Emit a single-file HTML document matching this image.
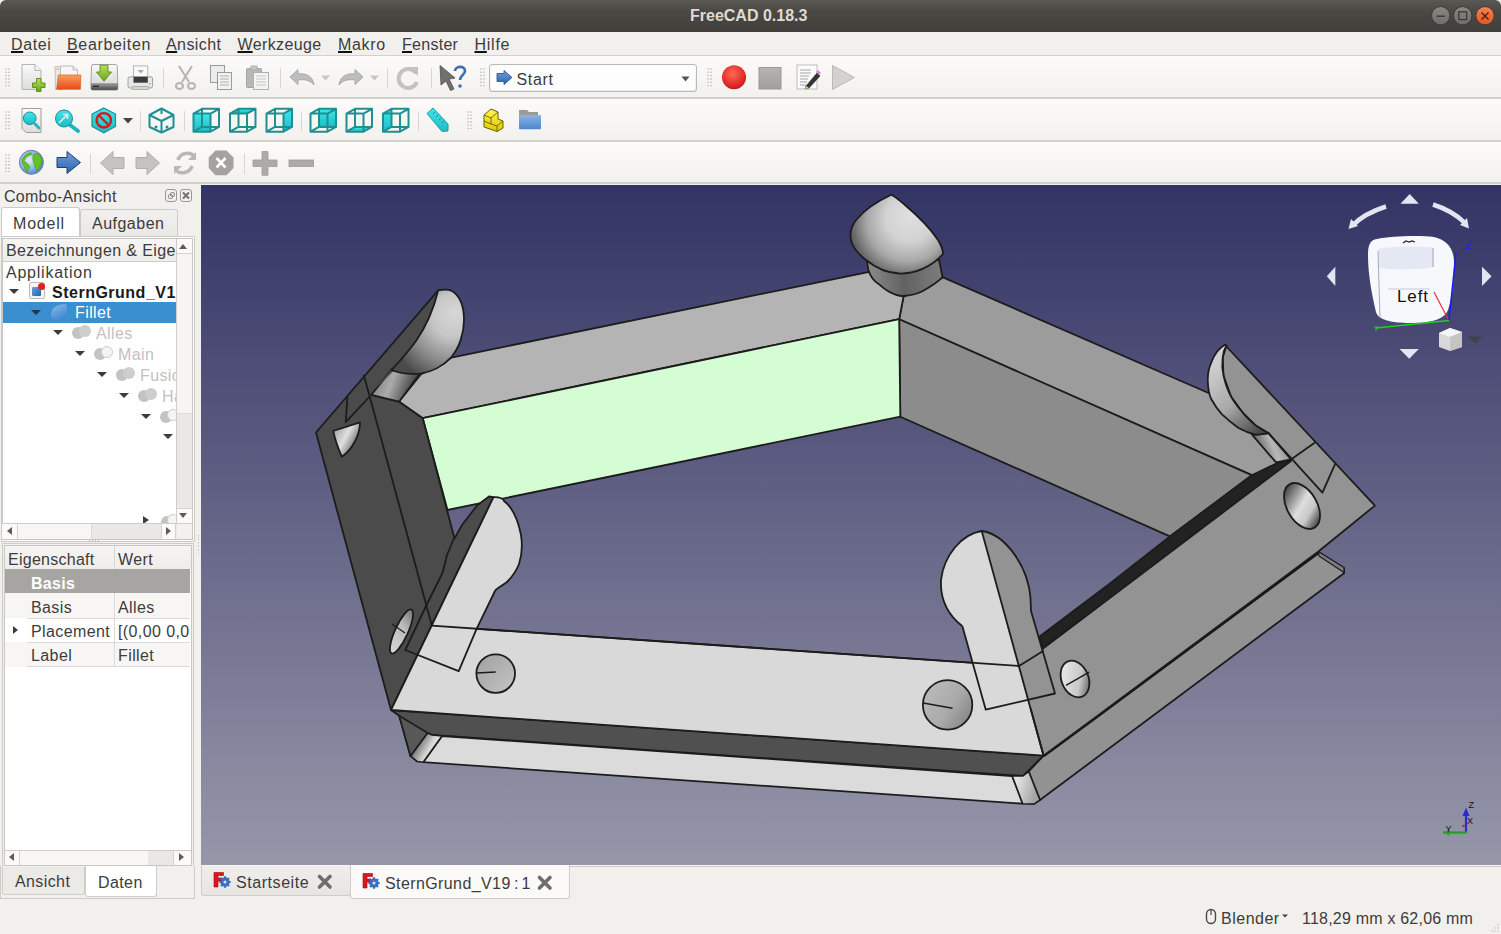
<!DOCTYPE html>
<html><head><meta charset="utf-8">
<style>
*{box-sizing:border-box}
html,body{margin:0;padding:0}
body{width:1501px;height:934px;overflow:hidden;position:relative;background:#f2f0ed;font-family:"Liberation Sans",sans-serif;color:#3c3c3c}
.abs{position:absolute}
.t{position:absolute;white-space:nowrap;font-size:16px;letter-spacing:0.4px;line-height:18px}
#title{left:0;top:0;width:1501px;height:32px;background:linear-gradient(#5a5852,#4a4944 35%,#403f3b);border-radius:6px 6px 0 0}
#menubar{left:0;top:32px;width:1501px;height:24px;background:#f1f0ec;border-bottom:1px solid #d2d0cc}
.tb{left:0;width:1501px;height:43px;background:linear-gradient(#fcfbf9,#f2f1ee);border-bottom:2px solid #d2d0cc}
.u{text-decoration:underline;text-decoration-thickness:2px;text-underline-offset:1px;text-decoration-color:#111}
.sep{position:absolute;width:1px;height:26px;background:#d5d3cf;border-right:1px solid #fff}
.tri{width:0;height:0;border-left:5px solid transparent;border-right:5px solid transparent;border-top:5px solid #3c3c3c}
.grip{position:absolute;width:5px;height:26px;background-image:radial-gradient(circle,#b9b7b3 0.8px,transparent 1px);background-size:3px 3px}
</style></head>
<body>
<!-- TITLE BAR -->
<div id="title" class="abs">
  <div class="t" style="left:690px;top:7px;font-weight:bold;font-size:16px;letter-spacing:0;color:#dfdbd2">FreeCAD 0.18.3</div>
  <svg class="abs" style="left:1420px;top:0" width="81" height="32" viewBox="1420 0 81 32">
    <defs><linearGradient id="wb" x1="0" y1="0" x2="0" y2="1"><stop offset="0" stop-color="#8a8985"/><stop offset="1" stop-color="#6e6d69"/></linearGradient>
    <linearGradient id="wc" x1="0" y1="0" x2="0" y2="1"><stop offset="0" stop-color="#f58456"/><stop offset="1" stop-color="#e4531c"/></linearGradient></defs>
    <circle cx="1440.7" cy="15.7" r="9.2" fill="url(#wb)" stroke="#3a3935" stroke-width="1"/>
    <path d="M1436.5,16.2 H1445" stroke="#3a3935" stroke-width="1.4"/>
    <circle cx="1462.7" cy="15.7" r="9.2" fill="url(#wb)" stroke="#3a3935" stroke-width="1"/>
    <rect x="1458.8" y="11.8" width="7.8" height="7.8" fill="none" stroke="#3a3935" stroke-width="1.3"/>
    <circle cx="1485" cy="15.7" r="9.2" fill="url(#wc)" stroke="#3a3935" stroke-width="1"/>
    <path d="M1481.5,12.5 L1488.5,19.5 M1488.5,12.5 L1481.5,19.5" stroke="#3a2418" stroke-width="1.3"/>
  </svg>
</div>
<!-- MENU BAR -->
<div id="menubar" class="abs">
  <span class="t" style="left:11px;top:3.5px;letter-spacing:0.62px"><span class="u">D</span>atei</span>
  <span class="t" style="left:67px;top:3.5px;letter-spacing:0.67px"><span class="u">B</span>earbeiten</span>
  <span class="t" style="left:166px;top:3.5px;letter-spacing:0.42px"><span class="u">A</span>nsicht</span>
  <span class="t" style="left:237.5px;top:3.5px;letter-spacing:0.38px"><span class="u">W</span>erkzeuge</span>
  <span class="t" style="left:338px;top:3.5px;letter-spacing:0.68px"><span class="u">M</span>akro</span>
  <span class="t" style="left:402px;top:3.5px;letter-spacing:0.28px"><span class="u">F</span>enster</span>
  <span class="t" style="left:474.5px;top:3.5px;letter-spacing:0.75px"><span class="u">H</span>ilfe</span>
</div>
<!-- TOOLBARS -->
<div class="abs tb" style="top:56px"></div>
<div class="abs tb" style="top:99px"></div>
<div class="abs tb" style="top:142px;height:42px"></div>
<svg class="abs" style="left:0;top:0" width="1501" height="184" viewBox="0 0 1501 184">
<defs>
  <linearGradient id="gDoc" x1="0" y1="0" x2="0" y2="1"><stop offset="0" stop-color="#fafafa"/><stop offset="1" stop-color="#dcdcdc"/></linearGradient>
  <linearGradient id="gGreen" x1="0" y1="0" x2="0" y2="1"><stop offset="0" stop-color="#b6e05a"/><stop offset="1" stop-color="#6aa51c"/></linearGradient>
  <linearGradient id="gOrange" x1="0" y1="0" x2="0" y2="1"><stop offset="0" stop-color="#f7a15d"/><stop offset="1" stop-color="#e8481a"/></linearGradient>
  <linearGradient id="gDrive" x1="0" y1="0" x2="0" y2="1"><stop offset="0" stop-color="#f0f0f0"/><stop offset="0.75" stop-color="#c8c8c8"/><stop offset="1" stop-color="#6a6a6a"/></linearGradient>
  <linearGradient id="gCyan" x1="0" y1="0" x2="0" y2="1"><stop offset="0" stop-color="#40e6ea"/><stop offset="1" stop-color="#1cbcc4"/></linearGradient>
  <radialGradient id="gRed" cx="0.45" cy="0.35" r="0.7"><stop offset="0" stop-color="#ff6a5a"/><stop offset="0.7" stop-color="#e02a22"/><stop offset="1" stop-color="#b0142a"/></radialGradient>
  <linearGradient id="gStop" x1="0" y1="0" x2="0" y2="1"><stop offset="0" stop-color="#b8b6b3"/><stop offset="1" stop-color="#a09e9b"/></linearGradient>
  <linearGradient id="gBlue" x1="0" y1="0" x2="0" y2="1"><stop offset="0" stop-color="#6da0dc"/><stop offset="1" stop-color="#2f63ad"/></linearGradient>
  <radialGradient id="gGlobe" cx="0.4" cy="0.4" r="0.7"><stop offset="0" stop-color="#e6f2fb"/><stop offset="0.6" stop-color="#7fb2e0"/><stop offset="1" stop-color="#3d6fb4"/></radialGradient>
  <linearGradient id="gYel" x1="0" y1="0" x2="0" y2="1"><stop offset="0" stop-color="#fff35a"/><stop offset="1" stop-color="#e0c800"/></linearGradient>
  <linearGradient id="gFold" x1="0" y1="0" x2="0" y2="1"><stop offset="0" stop-color="#8ab4e2"/><stop offset="1" stop-color="#4d86cc"/></linearGradient>
</defs>
<g fill="#b9b7b3">
  <!-- grips -->
  <g id="grip"><circle cx="6" cy="69" r="0.8"/><circle cx="9" cy="69" r="0.8"/><circle cx="6" cy="72.3" r="0.8"/><circle cx="9" cy="72.3" r="0.8"/><circle cx="6" cy="75.6" r="0.8"/><circle cx="9" cy="75.6" r="0.8"/><circle cx="6" cy="78.9" r="0.8"/><circle cx="9" cy="78.9" r="0.8"/><circle cx="6" cy="82.2" r="0.8"/><circle cx="9" cy="82.2" r="0.8"/><circle cx="6" cy="85.5" r="0.8"/><circle cx="9" cy="85.5" r="0.8"/></g>
  <use href="#grip" x="0" y="43"/><use href="#grip" x="0" y="86"/>
  <use href="#grip" x="475" y="0"/><use href="#grip" x="702" y="0"/><use href="#grip" x="462" y="43"/>
</g>
<g fill="#d8d6d2">
  <rect x="163" y="68" width="1" height="20"/><rect x="280" y="68" width="1" height="20"/><rect x="387" y="68" width="1" height="20"/><rect x="431" y="68" width="1" height="20"/>
  <rect x="140" y="111" width="1" height="20"/><rect x="184" y="111" width="1" height="20"/><rect x="301" y="111" width="1" height="20"/><rect x="418" y="111" width="1" height="20"/>
  <rect x="90" y="154" width="1" height="20"/><rect x="244" y="154" width="1" height="20"/>
</g>
<!-- ROW 1 -->
<!-- new -->
<path d="M22,64.5 H35 L41,70.5 V89.5 H22 Z" fill="url(#gDoc)" stroke="#b5b5b5" stroke-width="1"/>
<path d="M35,64.5 V70.5 H41" fill="#f4f4f4" stroke="#b5b5b5" stroke-width="1"/>
<path d="M36.5,78.5 h4.5 v4.5 h4 v4.5 h-4 v4 h-4.5 v-4 h-4 v-4.5 h4 z" fill="url(#gGreen)" stroke="#5e8f1a" stroke-width="1"/>
<!-- open -->
<path d="M55,66.5 H62 V89.3 H55.5 Z" fill="#e8e8e8" stroke="#b8b8b8" stroke-width="0.8"/>
<rect x="56.5" y="68.5" width="2.5" height="1.2" fill="#f0a050"/>
<path d="M60.5,66 H73 L77.5,70 V76 H60.5 Z" fill="#f6f6f6" stroke="#b5b5b5" stroke-width="0.9"/>
<path d="M73,66 V70 H77.5" fill="#e4e4e4" stroke="#b5b5b5" stroke-width="0.8"/>
<path d="M58.4,75 H80.8 L80.4,89.3 H56.6 Z" fill="url(#gOrange)" stroke="#dd5a22" stroke-width="0.7"/>
<!-- save -->
<path d="M93,64.5 H115.5 Q117,64.5 117.2,66.5 L117.8,84 H91 L91.5,66.5 Q91.8,64.5 93,64.5 Z" fill="url(#gDoc)" stroke="#9a9a9a" stroke-width="0.9"/>
<defs><linearGradient id="gDrv2" x1="0" y1="0" x2="0" y2="1"><stop offset="0" stop-color="#a8a8a8"/><stop offset="0.5" stop-color="#6a6a6a"/><stop offset="1" stop-color="#505050"/></linearGradient></defs><path d="M91,84 H117.8 V88.5 Q117.8,90 116,90 H92.8 Q91,90 91,88.5 Z" fill="url(#gDrv2)" stroke="#606060" stroke-width="0.6"/>
<rect x="93" y="85.6" width="6" height="1.3" fill="#222"/>
<ellipse cx="104.5" cy="77" rx="10.5" ry="5.5" fill="none" stroke="#dcdcdc" stroke-width="1"/>
<path d="M100,65.2 h8 v6.8 h3.5 l-7.5,9.2 l-7.5,-9.2 h3.5 z" fill="url(#gGreen)" stroke="#5e8f1a" stroke-width="0.9"/>
<!-- print -->
<rect x="133.5" y="65.9" width="14.3" height="12" fill="#fafafa" stroke="#b0b0b0" stroke-width="0.9"/>
<path d="M137.5,70 h6.5 l-3.25,3.5 z" fill="#a8a8a8"/>
<path d="M130,76.8 H151 Q152.6,76.8 152.6,79 V86 Q152.6,88 150.5,88 H130 Q128,88 128,86 V79 Q128,76.8 130,76.8 Z" fill="#e6e6e6" stroke="#999" stroke-width="0.9"/>
<rect x="133.5" y="76.8" width="14.3" height="5.9" fill="#3a3a3a"/>
<rect x="132" y="86.5" width="17" height="3" rx="1" fill="#d4d4d4" stroke="#9a9a9a" stroke-width="0.7"/>
<rect x="149" y="83" width="1.5" height="1.2" fill="#60d040"/>
<!-- cut -->
<g fill="none" stroke="#b4b4b4" stroke-width="2">
  <path d="M179,66 L189,82 M192,66 L182,82"/>
  <ellipse cx="179.5" cy="86" rx="3.5" ry="3"/><ellipse cx="191.5" cy="86" rx="3.5" ry="3"/>
</g>
<!-- copy -->
<rect x="210.5" y="65.5" width="14" height="17" fill="#ececec" stroke="#9a9a9a" stroke-width="1"/>
<rect x="217.5" y="72.5" width="14" height="17" fill="#f2f2f2" stroke="#9a9a9a" stroke-width="1"/>
<g stroke="#b0b0b0" stroke-width="1"><path d="M220,76h9M220,79h9M220,82h9M220,85h9"/></g>
<!-- paste -->
<rect x="246.5" y="68.5" width="15" height="19" rx="1" fill="#b8b8b8" stroke="#a4a4a4" stroke-width="1"/>
<rect x="251" y="66" width="6" height="4" fill="#c8c8c8" stroke="#a4a4a4" stroke-width="0.8"/>
<rect x="253.5" y="72.5" width="15" height="17" fill="#f4f4f4" stroke="#b0b0b0" stroke-width="1"/>
<g stroke="#c4c4c4" stroke-width="1"><path d="M256,76h10M256,79h10M256,82h10M256,85h10"/></g>
<!-- undo -->
<path d="M290,77 L298,69.5 V74 C306,73 313,76 314,85 C310,80 305,79 298,80 V84.5 Z" fill="#bdbdbd" stroke="#aaa" stroke-width="1" stroke-linejoin="round"/>
<path d="M321,75.5 h9 l-4.5,5 z" fill="#c6c6c6"/>
<!-- redo -->
<path d="M363,77 L355,69.5 V74 C347,73 340,76 339,85 C343,80 348,79 355,80 V84.5 Z" fill="#bdbdbd" stroke="#aaa" stroke-width="1" stroke-linejoin="round"/>
<path d="M370,75.5 h9 l-4.5,5 z" fill="#c6c6c6"/>
<!-- refresh -->
<path d="M416,73 A9.5,9.5 0 1 0 417,82" fill="none" stroke="#c2c2c2" stroke-width="4"/>
<path d="M409,67 L418,67 L418,76 Z" fill="#c2c2c2"/>
<!-- whats this -->
<path d="M440,65.5 L455,78 L449,79 L454,89 L450.5,90.5 L446,81 L441,85 Z" fill="#6e716e" stroke="#4a4c4a" stroke-width="0.8"/>
<path d="M455,71 C455,66 465,65 465,71 C465,75 460,75 460,80" fill="none" stroke="#3b6fb0" stroke-width="2.6"/>
<circle cx="460" cy="86" r="1.8" fill="#3b6fb0"/>
<!-- combo -->
<rect x="489.5" y="64.5" width="207" height="27" rx="2.5" fill="url(#gDoc)" stroke="#bcbab6" stroke-width="1"/>
<rect x="490.5" y="65.5" width="205" height="25" rx="2" fill="#fdfdfd"/>
<path d="M497,73.5 H504 V70.5 L512,77.5 L504,84.5 V81.5 H497 Z" fill="url(#gBlue)" stroke="#234c86" stroke-width="0.8"/>
<path d="M681.5,76.5 h8 l-4,5 z" fill="#555"/>
<!-- record -->
<circle cx="734" cy="77.3" r="12" fill="url(#gRed)"/>
<!-- stop -->
<rect x="759" y="67.5" width="22" height="21.5" fill="url(#gStop)" stroke="#9a9896" stroke-width="1"/>
<!-- edit macro -->
<rect x="797" y="65" width="20" height="24" fill="#fbfbfb" stroke="#bdbdbd" stroke-width="1"/>
<g stroke="#9a9a9a" stroke-width="0.9"><path d="M800,70h11M800,73h11M800,76h9M800,79h8M800,82h7M800,85h6"/></g>
<path d="M806,86 L817,73 L820,76 L809,88 L805,89 Z" fill="#333" stroke="#222" stroke-width="0.6"/>
<path d="M816,72 L818,70 L821,73 L819,75 Z" fill="#e080d8"/>
<path d="M805,89 L806,86 L809,88 Z" fill="#e8e070"/>
<!-- play -->
<path d="M832.5,65.5 L854.5,77.5 L832.5,89.5 Z" fill="#d4d2cf" stroke="#bcbab7" stroke-width="1" stroke-linejoin="round"/>
<!-- ROW 2 -->
<!-- fit all -->
<path d="M22,108.5 H41 V132.5 H26 L22,128.5 Z" fill="url(#gDoc)" stroke="#9e9e9e" stroke-width="1"/>
<path d="M35,124 L39,128" stroke="#1fb5bf" stroke-width="3" stroke-linecap="round"/>
<circle cx="29.7" cy="118.3" r="6.3" fill="url(#gCyan)" stroke="#168f96" stroke-width="1"/>
<!-- fit selection -->
<path d="M70,125 L78,131" stroke="#1fb5bf" stroke-width="4" stroke-linecap="round"/>
<circle cx="64" cy="118.5" r="8.5" fill="url(#gCyan)" stroke="#168f96" stroke-width="1"/>
<path d="M59,123 L67,115 M63,114.5 H67.5 V119" fill="none" stroke="#e8e8e8" stroke-width="1.6"/>
<!-- draw style -->
<path d="M103.8,108 L115.5,114 V126.5 L103.8,132.8 L92,126.5 V114 Z" fill="url(#gCyan)" stroke="#168f96" stroke-width="1.2"/>
<circle cx="103.8" cy="120.3" r="7.2" fill="none" stroke="#d01c1c" stroke-width="2.4"/>
<path d="M99,115.5 L108.6,125" stroke="#d01c1c" stroke-width="2.4"/>
<path d="M123,118 h10 l-5,5.5 z" fill="#444"/>
<!-- cubes -->
<g id="cubeIso" fill="none" stroke="#1e8f92" stroke-width="2" stroke-linejoin="round">
  <path d="M161.5,108.5 L173.5,115 V127 L161.5,132.5 L149.5,127 V115 Z"/>
  <path d="M149.5,115 L161.5,121 L173.5,115 M161.5,121 V132.5 M161.5,108.5 V114"/>
</g>
<circle cx="156" cy="127" r="1.5" fill="#1e8f92"/><circle cx="167" cy="127" r="1.5" fill="#1e8f92"/>
<polygon points="193.5,113.6 210.5,113.6 210.5,131.7 193.5,131.7" fill="url(#gCyan)"/><path d="M193.5,113.6 L210.5,113.6 L210.5,131.7 L193.5,131.7 Z M202.0,108.8 L219.0,108.8 L219.0,126.9 L202.0,126.9 Z M193.5,113.6 L202.0,108.8 M210.5,113.6 L219.0,108.8 M210.5,131.7 L219.0,126.9 M193.5,131.7 L202.0,126.9 " fill="none" stroke="#1e8f92" stroke-width="2" stroke-linejoin="round"/>
<polygon points="230.0,113.6 247.0,113.6 255.5,108.8 238.5,108.8" fill="url(#gCyan)"/><path d="M230.0,113.6 L247.0,113.6 L247.0,131.7 L230.0,131.7 Z M238.5,108.8 L255.5,108.8 L255.5,126.9 L238.5,126.9 Z M230.0,113.6 L238.5,108.8 M247.0,113.6 L255.5,108.8 M247.0,131.7 L255.5,126.9 M230.0,131.7 L238.5,126.9 " fill="none" stroke="#1e8f92" stroke-width="2" stroke-linejoin="round"/>
<polygon points="283.5,113.6 292.0,108.8 292.0,126.9 283.5,131.7" fill="url(#gCyan)"/><path d="M266.5,113.6 L283.5,113.6 L283.5,131.7 L266.5,131.7 Z M275.0,108.8 L292.0,108.8 L292.0,126.9 L275.0,126.9 Z M266.5,113.6 L275.0,108.8 M283.5,113.6 L292.0,108.8 M283.5,131.7 L292.0,126.9 M266.5,131.7 L275.0,126.9 " fill="none" stroke="#1e8f92" stroke-width="2" stroke-linejoin="round"/>
<polygon points="319.0,108.8 336.0,108.8 336.0,126.9 319.0,126.9" fill="url(#gCyan)"/><path d="M310.5,113.6 L327.5,113.6 L327.5,131.7 L310.5,131.7 Z M319.0,108.8 L336.0,108.8 L336.0,126.9 L319.0,126.9 Z M310.5,113.6 L319.0,108.8 M327.5,113.6 L336.0,108.8 M327.5,131.7 L336.0,126.9 M310.5,131.7 L319.0,126.9 " fill="none" stroke="#1e8f92" stroke-width="2" stroke-linejoin="round"/>
<polygon points="346.5,131.7 363.5,131.7 372.0,126.9 355.0,126.9" fill="url(#gCyan)"/><path d="M346.5,113.6 L363.5,113.6 L363.5,131.7 L346.5,131.7 Z M355.0,108.8 L372.0,108.8 L372.0,126.9 L355.0,126.9 Z M346.5,113.6 L355.0,108.8 M363.5,113.6 L372.0,108.8 M363.5,131.7 L372.0,126.9 M346.5,131.7 L355.0,126.9 " fill="none" stroke="#1e8f92" stroke-width="2" stroke-linejoin="round"/>
<polygon points="383.0,113.6 391.5,108.8 391.5,126.9 383.0,131.7" fill="url(#gCyan)"/><path d="M383.0,113.6 L400.0,113.6 L400.0,131.7 L383.0,131.7 Z M391.5,108.8 L408.5,108.8 L408.5,126.9 L391.5,126.9 Z M383.0,113.6 L391.5,108.8 M400.0,113.6 L408.5,108.8 M400.0,131.7 L408.5,126.9 M383.0,131.7 L391.5,126.9 " fill="none" stroke="#1e8f92" stroke-width="2" stroke-linejoin="round"/>
<!-- measure -->
<path d="M427,113.5 L433,108 L448,124 V131 L442,131.5 Z" fill="url(#gCyan)" stroke="#1e9ea4" stroke-width="1"/>
<g stroke="#168f96" stroke-width="1"><path d="M433,114l2,-2M436,117l2,-2M439,120l2,-2M442,123l2,-2"/></g>
<!-- part -->
<path d="M484,115 L491,109 L498,112 V119 L503,121 V128 L497,131.5 L484,127 Z" fill="url(#gYel)" stroke="#6b6000" stroke-width="1" stroke-linejoin="round"/>
<path d="M484,115 L491,118 L498,112 M491,118 V124 L497,126 L503,121 M497,126 V131.5 M484,121 L491,124" fill="none" stroke="#6b6000" stroke-width="0.9"/>
<!-- folder -->
<path d="M519,110 H527 L529,112 H538 V118 H519 Z" fill="#9a9a9a"/>
<rect x="519" y="115" width="22" height="14.3" rx="1" fill="url(#gFold)"/>
<!-- ROW 3 -->
<circle cx="31.4" cy="162.3" r="12" fill="url(#gGlobe)" stroke="#7a7ab0" stroke-width="1"/>
<path d="M22.5,158.7 L25.7,154.5 L30.4,152.6 L32.3,154 L29,155.4 L25.7,157.7 L23.9,161 L27.1,163.3 L29.9,166.6 L27.6,171.3 L25.7,170.8 L24.3,166.6 L22,162.4 Z M33.2,154.5 L36.9,153.2 L40,155.5 L41.6,159 L41.6,162.9 L39.3,167.5 L36.9,170.8 L35.5,168 L33.7,162.9 L32.7,159.1 Z" fill="#62c41e" stroke="#3f8f14" stroke-width="0.5"/>
<path d="M57,157.5 H67 V151.5 L80.5,162.5 L67,173.5 V167.5 H57 Z" fill="url(#gBlue)" stroke="#1f3f70" stroke-width="1"/>
<path d="M124,157.5 H113 V151.5 L100.5,163 L113,174.5 V168.5 H124 Z" fill="#c4c3c1" stroke="#b0aeab" stroke-width="1"/>
<path d="M136,157.5 H147 V151.5 L159.5,163 L147,174.5 V168.5 H136 Z" fill="#c4c3c1" stroke="#b0aeab" stroke-width="1"/>
<path d="M178,160 C180,153 190,151 194,156" fill="none" stroke="#b8b8b8" stroke-width="3.5"/>
<path d="M196,152 V160 H188 Z" fill="#b8b8b8"/>
<path d="M192,166 C190,173 180,175 176,170" fill="none" stroke="#b8b8b8" stroke-width="3.5"/>
<path d="M174,174 V166 H182 Z" fill="#b8b8b8"/>
<path d="M215.5,150.5 H226.5 L233.5,157.5 V168 L226.5,175.3 H215.5 L208.7,168 V157.5 Z" fill="#a3a2a0"/>
<path d="M216.5,158 L225.5,167.5 M225.5,158 L216.5,167.5" stroke="#fff" stroke-width="2.6"/>
<path d="M262,151.5 h6 v8.5 h9 v6.5 h-9 v8.8 h-6 v-8.8 h-9 v-6.5 h9 z" fill="#acabaa" stroke="#9c9b99" stroke-width="0.8"/>
<rect x="289" y="160" width="24.5" height="6.5" fill="#acabaa" stroke="#9c9b99" stroke-width="0.8"/>
</svg>
<span class="t" style="left:516.5px;top:71px;color:#3c3c3c;letter-spacing:0.68px">Start</span>

<!-- LEFT PANEL -->
<div class="abs" style="left:0;top:184px;width:200px;height:682px;background:#f2f0ed"></div>
<span class="t" style="left:4px;top:188px;letter-spacing:0.25px">Combo-Ansicht</span>
<!-- float/close buttons -->
<div class="abs" style="left:165px;top:189px;width:12px;height:13px;border:1.5px solid #9a9996;border-radius:3px"></div>
<div class="abs" style="left:167.5px;top:194px;width:5px;height:5px;border:1.3px solid #8a8986;border-radius:2px;background:#fff"></div>
<div class="abs" style="left:170px;top:191.5px;width:5px;height:5px;border:1.3px solid #8a8986;border-radius:2px"></div>
<div class="abs" style="left:180px;top:189px;width:12px;height:13px;border:1.5px solid #9a9996;border-radius:3px"></div><svg class="abs" style="left:180px;top:189px" width="12" height="13"><path d="M3,3.5 L9,9.5 M9,3.5 L3,9.5" stroke="#707070" stroke-width="2"/></svg>
<!-- tabs -->
<div class="abs" style="left:80px;top:209px;width:98px;height:28px;background:linear-gradient(#f1f0ee,#e9e8e5);border:1px solid #cdcbc7;border-bottom:none;border-radius:3px 3px 0 0"></div>
<span class="t" style="left:92px;top:215px;letter-spacing:0.49px">Aufgaben</span>
<div class="abs" style="left:1px;top:207px;width:79px;height:31px;background:#fff;border:1px solid #cdcbc7;border-bottom:none;border-radius:3px 3px 0 0"></div>
<span class="t" style="left:13px;top:214.5px;letter-spacing:0.8px">Modell</span>
<!-- tree frame -->
<div class="abs" style="left:1px;top:236px;width:194px;height:306px;border:1px solid #cdcbc7;background:#fdfdfc"></div>
<div class="abs" style="left:2px;top:238px;width:191px;height:302px;border:1px solid #c9c7c3;background:#fff"></div>
<!-- header -->
<div class="abs" style="left:3px;top:239px;width:174px;height:23px;background:linear-gradient(#f6f5f3,#eeedea);border-bottom:1px solid #cfcdc9;overflow:hidden">
  <span class="t" style="left:3px;top:3px">Bezeichnungen &amp; Eigenschaften</span>
</div>
<!-- vscroll -->
<div class="abs" style="left:176px;top:239px;width:16px;height:285px;background:#e9e8e6;border-left:1px solid #cfcdc9"></div>
<div class="abs" style="left:177px;top:239px;width:15px;height:15px;background:#fbfaf9;border-bottom:1px solid #d5d3cf"></div>
<div class="abs" style="left:179px;top:244px;width:0;height:0;border-left:4.5px solid transparent;border-right:4.5px solid transparent;border-bottom:5px solid #5c5c5c"></div>
<div class="abs" style="left:177px;top:254px;width:15px;height:160px;background:#f6f5f3;border-bottom:1px solid #dcdad6"></div>
<div class="abs" style="left:177px;top:508px;width:15px;height:15px;background:#fbfaf9;border-top:1px solid #d5d3cf"></div>
<div class="abs" style="left:179px;top:512.5px;width:0;height:0;border-left:4.5px solid transparent;border-right:4.5px solid transparent;border-top:5px solid #5c5c5c"></div>
<!-- hscroll -->
<div class="abs" style="left:2px;top:523px;width:190px;height:16px;background:#e9e8e5;border-top:1px solid #cfcdc9"></div>
<div class="abs" style="left:2px;top:524px;width:16px;height:15px;background:#fbfaf9;border-right:1px solid #d5d3cf"></div>
<div class="abs" style="left:7px;top:527px;width:0;height:0;border-top:4px solid transparent;border-bottom:4px solid transparent;border-right:5px solid #5c5c5c"></div>
<div class="abs" style="left:18px;top:524px;width:74px;height:15px;background:#f7f6f4;border-right:1px solid #dcdad6"></div>
<div class="abs" style="left:161px;top:524px;width:15px;height:15px;background:#fbfaf9;border-left:1px solid #d5d3cf;border-right:1px solid #d5d3cf"></div>
<div class="abs" style="left:166px;top:527px;width:0;height:0;border-top:4px solid transparent;border-bottom:4px solid transparent;border-left:5px solid #5c5c5c"></div>
<div class="abs" style="left:177px;top:524px;width:15px;height:15px;background:#f2f1ef"></div>
<!-- tree rows -->
<div class="abs" style="left:3px;top:262px;width:173px;height:261px;overflow:hidden">
  <span class="t" style="left:3px;top:2px;color:#3c3c3c;letter-spacing:0.76px">Applikation</span>
  <div class="abs tri" style="left:6px;top:27px"></div>
  <div class="abs" style="left:26px;top:20px;width:16px;height:17px;border:1px solid #bdbbb7;border-radius:2px;background:#f4f4f4"></div>
  <div class="abs" style="left:29px;top:25px;width:9px;height:9px;background:linear-gradient(135deg,#6aa0e0,#2a5fa8);border-radius:1px"></div>
  <div class="abs" style="left:35px;top:21px;width:7px;height:7px;background:#e02020;border-radius:50%"></div>
  <span class="t" style="left:49px;top:22px;font-weight:bold;color:#1a1a1a;letter-spacing:0.5px">SternGrund_V19</span>
  <div class="abs" style="left:0;top:40px;width:173px;height:21px;background:#3a8fd0"></div>
  <div class="abs tri" style="left:28px;top:48px;border-top-color:#1d3a55"></div>
  <div class="abs" style="left:48px;top:43px;width:16px;height:14px;border-radius:8px 3px 2px 6px;background:linear-gradient(160deg,#9cc4ef,#3d7fd0);opacity:0.75;transform:skewY(-10deg)"></div>
  <span class="t" style="left:72px;top:42px;color:#fff">Fillet</span>
  <div class="abs tri" style="left:50px;top:68px"></div>
  <div class="abs" style="left:69px;top:64.5px;width:12px;height:12px;border-radius:50%;background:#c4c3c1"></div>
  <div class="abs" style="left:76px;top:62.5px;width:12px;height:12px;border-radius:50%;background:#cfcecc"></div>
  <span class="t" style="left:93px;top:63px;color:#c2c1bf">Alles</span>
  <div class="abs tri" style="left:72px;top:89px"></div>
  <div class="abs" style="left:91px;top:85.5px;width:12px;height:12px;border-radius:50%;background:#c4c3c1"></div>
  <div class="abs" style="left:98px;top:83.5px;width:12px;height:12px;border-radius:50%;background:#f4f4f2;border:1px solid #cfcecc"></div>
  <span class="t" style="left:115px;top:84px;color:#c2c1bf">Main</span>
  <div class="abs tri" style="left:94px;top:110px"></div>
  <div class="abs" style="left:113px;top:106.5px;width:12px;height:12px;border-radius:50%;background:#c4c3c1"></div>
  <div class="abs" style="left:120px;top:104.5px;width:12px;height:12px;border-radius:50%;background:#cfcecc"></div>
  <span class="t" style="left:137px;top:105px;color:#c2c1bf">Fusion</span>
  <div class="abs tri" style="left:116px;top:131px"></div>
  <div class="abs" style="left:135px;top:127.5px;width:12px;height:12px;border-radius:50%;background:#c4c3c1"></div>
  <div class="abs" style="left:142px;top:125.5px;width:12px;height:12px;border-radius:50%;background:#cfcecc"></div>
  <span class="t" style="left:159px;top:126px;color:#c2c1bf">Ha</span>
  <div class="abs tri" style="left:138px;top:152px"></div>
  <div class="abs" style="left:157px;top:148.5px;width:12px;height:12px;border-radius:50%;background:#c4c3c1"></div>
  <div class="abs" style="left:164px;top:146.5px;width:12px;height:12px;border-radius:50%;background:#f4f4f2;border:1px solid #cfcecc"></div>
  <div class="abs tri" style="left:160px;top:172px"></div>
  <div class="abs" style="left:140px;top:254px;width:0;height:0;border-top:4px solid transparent;border-bottom:4px solid transparent;border-left:6px solid #3c3c3c"></div>
  <div class="abs" style="left:158px;top:253.5px;width:12px;height:12px;border-radius:50%;background:#c4c3c1"></div>
  <div class="abs" style="left:164px;top:251.5px;width:12px;height:12px;border-radius:50%;background:#f4f4f2;border:1px solid #cfcecc"></div>
</div>
<!-- splitter dots -->
<div class="abs" style="left:88px;top:540px;width:12px;height:2px;background-image:radial-gradient(circle,#bbb9b5 0.7px,transparent 0.9px);background-size:3px 2px"></div>
<!-- property frame -->
<div class="abs" style="left:2px;top:543px;width:192px;height:325px;border:1px solid #cdcbc7;background:#f2f0ed"></div>
<div class="abs" style="left:4px;top:545px;width:188px;height:321px;border:1px solid #c9c7c3;background:#fff"></div>
<!-- prop header -->
<div class="abs" style="left:5px;top:546px;width:186px;height:23px;background:linear-gradient(#f6f5f3,#eeedea)"></div>
<div class="abs" style="left:114px;top:546px;width:1px;height:23px;background:#d8d6d2"></div>
<span class="t" style="left:8px;top:551px;letter-spacing:0.26px">Eigenschaft</span>
<span class="t" style="left:118px;top:551px">Wert</span>
<!-- group row -->
<div class="abs" style="left:5px;top:569px;width:185px;height:24px;background:#a7a5a1"></div>
<span class="t" style="left:31px;top:575px;color:#fff;font-weight:bold;letter-spacing:0.3px">Basis</span>
<!-- rows -->
<div class="abs" style="left:5px;top:593px;width:185px;height:25px;background:#f7f6f4"></div>
<div class="abs" style="left:5px;top:618px;width:185px;height:24px;background:#fff"></div>
<div class="abs" style="left:5px;top:642px;width:185px;height:25px;background:#f7f6f4"></div>
<div class="abs" style="left:27px;top:618px;width:163px;height:1px;background:#dcdad6"></div>
<div class="abs" style="left:27px;top:642px;width:163px;height:1px;background:#dcdad6"></div>
<div class="abs" style="left:27px;top:666px;width:163px;height:1px;background:#dcdad6"></div>
<div class="abs" style="left:114px;top:593px;width:1px;height:74px;background:#dcdad6"></div>
<span class="t" style="left:31px;top:599px">Basis</span>
<span class="t" style="left:118px;top:599px">Alles</span>
<div class="abs" style="left:13px;top:626px;width:0;height:0;border-top:4.5px solid transparent;border-bottom:4.5px solid transparent;border-left:5px solid #3c3c3c"></div>
<span class="t" style="left:31px;top:623px">Placement</span>
<div class="abs" style="left:118px;top:618px;width:72px;height:24px;overflow:hidden"><span class="t" style="left:0;top:5px">[(0,00 0,00 1,00); 0,00 °]</span></div>
<span class="t" style="left:31px;top:647px">Label</span>
<span class="t" style="left:118px;top:647px">Fillet</span>
<!-- prop hscroll -->
<div class="abs" style="left:5px;top:850px;width:186px;height:15px;background:#f8f7f5;border-top:1px solid #d0cec9"></div>
<div class="abs" style="left:5px;top:851px;width:15px;height:14px;background:#fbfaf9;border-right:1px solid #d5d3cf"></div>
<div class="abs" style="left:9px;top:853px;width:0;height:0;border-top:4px solid transparent;border-bottom:4px solid transparent;border-right:5px solid #5c5c5c"></div>
<div class="abs" style="left:148px;top:851px;width:25px;height:14px;background:#e9e8e5"></div>
<div class="abs" style="left:173px;top:851px;width:17px;height:14px;background:#fbfaf9;border-left:1px solid #d5d3cf"></div>
<div class="abs" style="left:179px;top:853px;width:0;height:0;border-top:4px solid transparent;border-bottom:4px solid transparent;border-left:5px solid #5c5c5c"></div>
<!-- bottom tabs -->
<div class="abs" style="left:0;top:866px;width:195px;height:33px;border:1px solid #cdcbc7;border-top:none;background:#f2f0ed"></div>
<div class="abs" style="left:2px;top:867px;width:83px;height:28px;background:#eceae7;border:1px solid #cfcdc9;border-top:none;border-radius:0 0 3px 3px"></div>
<span class="t" style="left:15px;top:873px">Ansicht</span>
<div class="abs" style="left:85px;top:866px;width:72px;height:31px;background:#fff;border:1px solid #cfcdc9;border-top:none;border-radius:0 0 3px 3px"></div>
<span class="t" style="left:98px;top:874px">Daten</span>
<!-- vertical splitter dots -->
<div class="abs" style="left:197px;top:534px;width:3px;height:19px;background-image:radial-gradient(circle,#c4c2be 0.6px,transparent 0.8px);background-size:3px 3.5px"></div>

<!-- 3D VIEW -->
<svg class="abs" style="left:0;top:0" width="1501" height="934" viewBox="0 0 1501 934">
  <defs>
    <linearGradient id="bg" x1="0" y1="185" x2="0" y2="865" gradientUnits="userSpaceOnUse">
      <stop offset="0" stop-color="#333365"/><stop offset="1" stop-color="#9797aa"/>
    </linearGradient>
  </defs>
  <rect x="201" y="185" width="1300" height="680" fill="url(#bg)"/>
  <defs>
    <radialGradient id="capTop" gradientUnits="userSpaceOnUse" cx="906" cy="224" r="60" fx="912" fy="214">
      <stop offset="0" stop-color="#e0e0e0"/><stop offset="0.4" stop-color="#d2d2d2"/><stop offset="0.68" stop-color="#a8a8a8"/><stop offset="0.88" stop-color="#6e6e6e"/><stop offset="1" stop-color="#4e4e4e"/>
    </radialGradient>
    <linearGradient id="stemTop" gradientUnits="userSpaceOnUse" x1="866" y1="0" x2="943" y2="0">
      <stop offset="0" stop-color="#8c8c8c"/><stop offset="0.5" stop-color="#626262"/><stop offset="1" stop-color="#7e7e7e"/>
    </linearGradient>
    <radialGradient id="capL" gradientUnits="userSpaceOnUse" cx="450" cy="322" r="62" fx="455" fy="312">
      <stop offset="0" stop-color="#d8d8d8"/><stop offset="0.35" stop-color="#c6c6c6"/><stop offset="0.7" stop-color="#8a8a8a"/><stop offset="1" stop-color="#4a4a4a"/>
    </radialGradient>
    <linearGradient id="stemL" gradientUnits="userSpaceOnUse" x1="378" y1="380" x2="410" y2="392">
      <stop offset="0" stop-color="#8c8c8c"/><stop offset="0.4" stop-color="#ababab"/><stop offset="1" stop-color="#4a4a4a"/>
    </linearGradient>
    <linearGradient id="capR" gradientUnits="userSpaceOnUse" x1="1205" y1="370" x2="1262" y2="438">
      <stop offset="0" stop-color="#d0d0d0"/><stop offset="0.5" stop-color="#a8a8a8"/><stop offset="1" stop-color="#3a3a3a"/>
    </linearGradient>
    <linearGradient id="stemR" gradientUnits="userSpaceOnUse" x1="1258" y1="452" x2="1288" y2="440">
      <stop offset="0" stop-color="#606060"/><stop offset="0.5" stop-color="#b8b8b8"/><stop offset="1" stop-color="#8a8a8a"/>
    </linearGradient>
    <linearGradient id="hole1" gradientUnits="userSpaceOnUse" x1="480" y1="660" x2="512" y2="690">
      <stop offset="0" stop-color="#a4a4a4"/><stop offset="1" stop-color="#c2c2c2"/>
    </linearGradient>
    <linearGradient id="hole2" gradientUnits="userSpaceOnUse" x1="925" y1="690" x2="972" y2="720">
      <stop offset="0" stop-color="#bababa"/><stop offset="0.55" stop-color="#aaaaaa"/><stop offset="1" stop-color="#848484"/>
    </linearGradient>
    <linearGradient id="hole3" gradientUnits="userSpaceOnUse" x1="1062" y1="672" x2="1090" y2="690">
      <stop offset="0" stop-color="#e8e8e8"/><stop offset="0.6" stop-color="#c8c8c8"/><stop offset="1" stop-color="#555"/>
    </linearGradient>
    <linearGradient id="hole4" gradientUnits="userSpaceOnUse" x1="1290" y1="488" x2="1312" y2="528">
      <stop offset="0" stop-color="#505050"/><stop offset="0.45" stop-color="#dedede"/><stop offset="0.7" stop-color="#c8c8c8"/><stop offset="1" stop-color="#3a3a3a"/>
    </linearGradient>
    <linearGradient id="hole5" gradientUnits="userSpaceOnUse" x1="390" y1="650" x2="413" y2="612">
      <stop offset="0" stop-color="#d8d8d8"/><stop offset="0.6" stop-color="#bbbbbb"/><stop offset="1" stop-color="#707070"/>
    </linearGradient>
    <linearGradient id="hole6" gradientUnits="userSpaceOnUse" x1="336" y1="432" x2="360" y2="445">
      <stop offset="0" stop-color="#b0b0b0"/><stop offset="0.4" stop-color="#e0e0e0"/><stop offset="1" stop-color="#505050"/>
    </linearGradient>
    <linearGradient id="fil1" gradientUnits="userSpaceOnUse" x1="417" y1="744" x2="433" y2="753">
      <stop offset="0" stop-color="#707070"/><stop offset="0.7" stop-color="#d8d8d8"/><stop offset="1" stop-color="#e0e0e0"/>
    </linearGradient>
    <linearGradient id="fil2" gradientUnits="userSpaceOnUse" x1="1016" y1="786" x2="1036" y2="792">
      <stop offset="0" stop-color="#e2e2e2"/><stop offset="1" stop-color="#a4a4a4"/>
    </linearGradient>
  </defs>
  <g id="model" stroke="#1c1c1c" stroke-width="1.8" stroke-linejoin="round">
    <!-- back-right bar top face -->
    <polygon fill="#9c9c9c" points="899.2,319.2 903.5,296.7 943,277.4 1212,394.5 1240,425 1292.4,459.5 1252.8,475.6"/>
    <!-- back-right bar inner face -->
    <polygon fill="#8c8c8c" points="899.2,319.2 1252.8,475.6 1169.9,536.4 900.3,416.7"/>
    <!-- black stripe -->
    <polygon fill="#222222" points="1039.6,636.5 1110,583.5 1169.9,536.4 1251.3,475.5 1276.4,463.5 1291.8,459.6 1291.8,460.6 1188.7,540 1110,598.9 1042.5,648"/>
    <!-- lower flange -->
    <polygon fill="#929292" points="1043.5,755.6 1318.4,552.3 1344,568.3 1344,573.2 1040,800 1028.7,771.5"/>
    <polygon fill="#7c7c7c" stroke-width="1.2" points="1318.4,551.5 1344,567.5 1344,572.5 1319,556"/>
    <polyline fill="none" stroke="#151515" stroke-width="3.4" points="1043.5,755.6 1100,714.2 1318.4,552.3"/>
    <!-- right slab top face -->
    <polygon fill="#939393" points="1225,345 1374.9,505.6 1318.4,551.5 1100,714 1043.5,755.6 1027.7,700 1042.7,648.8 1291,461 1268.5,433.2 1255,425 1243,413 1231,396.5 1223.5,375.5 1222.7,357.5 1226.5,345.5"/>
    <!-- back-left bar top face -->
    <polygon fill="#b4b4b4" points="398.8,401.6 421,374.2 443.3,364 451.4,357.6 869.3,271.8 903.5,296.7 899.2,319.2 422.7,418.2"/>
    <!-- green face -->
    <polygon fill="#d4fdd4" points="422.7,418.2 899.2,319.2 900.3,416.7 447.5,510"/>
    <!-- left slab -->
    <polygon fill="#4b4b4b" points="316,432.5 438.2,290.3 450.2,290.3 443.3,362.2 392,369 371.4,394.8 398.8,401.6 422.7,418.2 454.5,538.5 462,525 477,505.5 489,496.5 493.5,497.2 391,710"/>
    <!-- front bar dark strip -->
    <polygon fill="#505050" points="391,710 1043.5,755.6 1023,776 432,735 427.7,733 410.5,756.2 399.2,715.7"/>
    <polygon fill="#585858" stroke-width="1.6" points="399.2,715.7 427.7,733 410.5,756.2"/>
    <!-- front bar lower face -->
    <polygon fill="#dbdbdb" points="442,736 1012.2,776 1022.7,803.7 423.2,762.2"/>
    <path fill="url(#fil1)" stroke-width="1.6" d="M427.7,733 L432,735 L442,736 L423.2,762.2 L417.2,761.5 L410.5,756.2 Z"/>
    <path fill="url(#fil2)" stroke-width="1.6" d="M1012.2,776 L1022.7,776 L1028.7,771.5 L1040,800 L1034,804.1 L1022.7,803.7 Z"/>
    <!-- front bar top face + left knob light face -->
    <path fill="#d9d9d9" d="M391,710 L493.5,497.2 C500,497 504,499 504,501 C512,507 518,520 521,535 C523,548 521,558 519,564 C515,574 511,578 507,582 C502,586 497,588 495,591 L476.6,628.8 L1019,666 L1043.5,755.6 Z"/>
    <!-- front-right knob light face -->
    <path fill="#d9d9d9" stroke="none" d="M981.7,531 C962,534 944,555 941,580 C940,600 948,615 962.4,626.3 L985.7,709.6 L1030,709.6 Z"/>
    <!-- front-right knob dark face -->
    <path fill="#939393" stroke="none" d="M981.7,531 C1005,534 1028,566 1030.5,598 L1031,611 L1055.6,693.5 L1030,709.6 Z"/>
    <path fill="none" d="M962.4,626.3 C948,615 940,600 941,580 C944,555 962,534 981.7,531 C1005,534 1028,566 1030.5,598 L1031,611"/>
    <!-- top knob -->
    <path fill="url(#stemTop)" d="M867,260.7 L868.3,270 C871,278 875,282 878.9,284.2 C886,291 893,295 901.2,296 C910,296 917,294 922.4,291.3 C930,287 937,283 942.5,277.2 L939,259.5 Z"/>
    <path fill="url(#capTop)" d="M891.2,194.7 C878,201 865,209 857,219 C851,226 850,233 850.6,238 C851.5,246 857,253 866,260 C876,268 887,273 899,273.5 C914,274 932,267 943,254 C943,249 941,245 938,240 C930,228 918,216 905,205 C900,201 896,197 891.2,194.7 Z"/>
    <!-- back-left knob -->
    <path fill="url(#stemL)" d="M391.5,370 L420,373.6 L399,401.7 L371.4,394.8 Z"/>
    <path fill="#4b4b4b" stroke="none" d="M438.2,290.3 L429.6,314.3 L412.5,348.5 L392,369 L371,393 L420,345 Z"/>
    <path fill="url(#capL)" d="M438.2,290.3 C443,289.5 449,289.5 452,291 C460,296 464,306 464,320 C464,334 459,348 451.4,357 C443,366 432,372 420,373.6 C410,374.5 399,373 391.5,370 C398,363 408,352 416,341 C425,328 433,312 438.2,290.3 Z"/>
    <!-- right slab knob -->
    <path fill="url(#stemR)" d="M1252,434.7 L1268.5,433.2 L1291,459.4 L1276,462.4 Z"/>
    <path fill="url(#capR)" d="M1225,344.7 C1219,348 1214,355 1211.5,362 C1208,370 1207.7,375 1207.7,380 C1208,390 1209,395 1211.5,399.5 C1215,406 1218,410 1222,414.4 C1228,420 1233,424 1238.5,428 C1244,431 1249,433 1255,434.7 C1260,435 1264,434 1268.5,433.2 C1263,430 1259,428 1255,425 C1250,420 1246,417 1243,413 C1238,407 1234,402 1231,396.5 C1227,389 1225,382 1223.5,375.5 C1222,369 1222,363 1222.7,357.5 C1223,352 1225,348 1226.5,345.5 Z"/>
    <!-- holes -->
    <ellipse cx="401.5" cy="631.5" rx="6.5" ry="24" transform="rotate(24.5 401.5 631.5)" fill="url(#hole5)"/>
    <path fill="url(#hole6)" d="M333.2,431 L360,422.4 C360,435 352,450 341.8,456.7 C338,448 335,440 333.2,431 Z"/>
    <circle cx="495.7" cy="673.6" r="19.3" fill="url(#hole1)"/>
    <circle cx="947.6" cy="704.9" r="24.7" fill="url(#hole2)"/>
    <ellipse cx="1075" cy="679" rx="13.5" ry="19" transform="rotate(-22 1075 679)" fill="url(#hole3)"/>
    <ellipse cx="1302" cy="506" rx="15" ry="25" transform="rotate(-30 1302 506)" fill="url(#hole4)"/>
    <!-- lines -->
    <g fill="none">
    <polyline points="363.7,375 369.7,396.5 431.7,625"/>
    <polyline points="347.4,396.5 345.7,422.2 369.7,396.5"/>
    <polyline points="431.7,625.6 1019,666"/>
    <polyline points="454.5,537 447,555 442.5,573 426,606 405.3,650 458.7,671.2 476.6,628.8"/>
    <polyline points="962.4,626.3 985.7,709.6 1055,693.5 1031,611"/>
    <polyline points="1019,666 1043.5,650.7"/>
    <polyline points="981.7,531 1043.5,755.6"/>
    <polyline points="1268.5,433.2 1322.4,492.7 1335.2,463.8"/>
    <polyline points="1291,459.5 1315,442.4"/>
    <polyline stroke-width="1.5" points="476.5,673 495.7,672"/>
    <polyline stroke-width="1.5" points="923.2,703 952.5,708.2"/>
    <polyline stroke-width="1.5" points="1066,685.3 1089.2,672.2"/>
    <polyline stroke-width="1.2" points="392,624 405,633"/>
    
    </g>
  </g>
  <!-- NAV CUBE -->
  <g id="navcube">
    <g fill="#e2e6f2">
      <path d="M1400.5,203.8 L1409.7,194 L1418.8,203.8 Z"/>
      <path d="M1335.3,266.7 L1326.8,276.3 L1335.3,286 Z"/>
      <path d="M1482,266.7 L1491.6,276.3 L1482,286 Z"/>
      <path d="M1399.6,349 L1418.8,349 L1409.2,358.8 Z"/>
    </g>
    <path d="M1386,206.5 C1372,211 1360,218 1353,225" fill="none" stroke="#e2e6f2" stroke-width="4.5"/>
    <path d="M1348.5,229 L1351,219 L1358,226 Z" fill="#e2e6f2"/>
    <path d="M1433,204.5 C1447,209 1458,216 1465,223" fill="none" stroke="#e2e6f2" stroke-width="4.5"/>
    <path d="M1469,228.5 L1460,225 L1467,218 Z" fill="#e2e6f2"/>
    <path d="M1377,239 C1390,236 1420,235 1434,237 C1448,240 1454,250 1454,262 C1454,280 1452,298 1448,310 C1444,320 1430,323 1410,323 C1392,323 1378,320 1376,312 C1372,295 1368,275 1368,255 C1368,245 1370,240 1377,239 Z" fill="#f7f8fc"/>
    <path d="M1378,249 C1395,246 1425,246 1434,248 L1434,267 C1420,270 1392,270 1378,268 Z" fill="#e4e8f2"/>
    <path d="M1378,251 L1380,318" stroke="#a8a8c0" stroke-width="1" fill="none"/>
    <path d="M1433,248 L1433,267" stroke="#a8a8c0" stroke-width="1" fill="none"/>
    <path d="M1388,289 L1430,289" stroke="#c8c8d8" stroke-width="1"/>
    <text x="1397" y="302" font-family="Liberation Sans" font-size="17" letter-spacing="0.9" fill="#111">Left</text>
    <path d="M1403,243 l3,-2 l3,1 l3,-1 l3,1" stroke="#222" stroke-width="1.2" fill="none"/>
    <path d="M1456,253 L1449,320" stroke="#1a1aff" stroke-width="1.5"/>
    <text x="1465.5" y="249" font-family="Liberation Sans" font-size="10" fill="#1a1aff">Z</text>
    <path d="M1434,292 L1448,319" stroke="#e03030" stroke-width="1.2"/>
    <path d="M1449,320.5 L1376,328" stroke="#20d020" stroke-width="1.6"/>
    <path d="M1376,327 v4 M1374,326 l2,2 l2,-2" stroke="#20d020" stroke-width="1" fill="none"/>
    <path d="M1439,333 L1450,328 L1462,332 V347 L1450,351 L1439,347 Z" fill="#d8d8d8"/>
    <path d="M1439,333 L1450,337 L1462,332 L1450,328 Z" fill="#f4f4f4"/>
    <path d="M1450,337 V351 L1462,347 V332 Z" fill="#c4c4c4"/>
    <path d="M1468,336.5 L1482,336.5 L1475,343.5 Z" fill="#404048"/>
  </g>
  <!-- AXIS -->
  <g>
    <path d="M1466,833 V812" stroke="#2a2ad0" stroke-width="2.2"/>
    <path d="M1462.5,816 L1466,807.5 L1469.5,816 Z" fill="#2a2ad0"/>
    <path d="M1443,832.5 H1467" stroke="#22a022" stroke-width="2.2"/>
    <path d="M1449,829 L1445,832.5 L1449,836 Z" fill="#22a022"/>
    <circle cx="1463.5" cy="826" r="1.3" fill="#d02020"/>
    <text x="1468.5" y="807.5" font-family="Liberation Sans" font-size="9" fill="#111">Z</text>
    <text x="1467" y="824" font-family="Liberation Sans" font-size="9" fill="#111">X</text>
    <text x="1445.5" y="832" font-family="Liberation Sans" font-size="9" fill="#111">Y</text>
  </g>
</svg>
<!-- STATUS + TABS -->
<div class="abs" style="left:195px;top:865px;width:1306px;height:69px;background:#f2f0ed"></div>
<div class="abs" style="left:201px;top:865px;width:1300px;height:1px;background:#f6f5f3"></div>
<div class="abs" style="left:569px;top:866px;width:932px;height:1px;background:#cdcbc7"></div>
<div class="abs" style="left:201px;top:866px;width:150px;height:30px;background:linear-gradient(#efeeec,#e6e5e2);border:1px solid #cfcdc9;border-top:none;border-radius:0 0 3px 3px"></div>
<div class="abs" style="left:350px;top:865px;width:220px;height:34px;background:#fbfaf9;border:1px solid #cfcdc9;border-top:none;border-radius:0 0 3px 3px"></div>
<svg class="abs" style="left:0;top:0" width="1501" height="934" viewBox="0 0 1501 934">
  <g id="fcico">
    <path d="M214,872.5 H223.5 V875.5 H218 V878 H222 V881 H218 V887 H214 Z" fill="#e0141c" stroke="#a00810" stroke-width="0.6"/>
    <circle cx="225" cy="882" r="4.3" fill="#3a70c0" stroke="#2a5090" stroke-width="0.6"/>
    <g stroke="#3a70c0" stroke-width="2.2"><path d="M225,876.3v11.4M219.3,882h11.4M221,878l8,8M229,878l-8,8"/></g>
    <circle cx="225" cy="882" r="1.5" fill="#cfe0f5"/>
  </g>
  <use href="#fcico" x="149" y="1"/>
  <path d="M319.5,876.5 L330,887 M330,876.5 L319.5,887" stroke="#6d6d6b" stroke-width="3.6" stroke-linecap="round"/>
  <path d="M539.5,877.5 L550,888 M550,877.5 L539.5,888" stroke="#6d6d6b" stroke-width="3.6" stroke-linecap="round"/>
  <!-- status mouse icon -->
  <rect x="1206.5" y="909.5" width="9" height="14" rx="4.5" fill="none" stroke="#4a4a4a" stroke-width="1.4"/>
  <path d="M1211,910 v5" stroke="#4a4a4a" stroke-width="1.2"/>
  <path d="M1282,914.5 h6 l-3,3 z" fill="#3c3c3c"/>
  <!-- resize grip -->
  <g fill="#c4c2be"><circle cx="1498" cy="931" r="0.8"/><circle cx="1495" cy="931" r="0.8"/><circle cx="1492" cy="931" r="0.8"/><circle cx="1498" cy="928" r="0.8"/><circle cx="1495" cy="928" r="0.8"/><circle cx="1498" cy="925" r="0.8"/></g>
</svg>
<span class="t" style="left:236px;top:874px;letter-spacing:0.56px">Startseite</span>
<span class="t" style="left:385px;top:875px">SternGrund_V19<span style="letter-spacing:0">&#8201;:&#8201;</span>1</span>
<span class="t" style="left:1221px;top:909.5px;letter-spacing:0.5px">Blender</span>
<span class="t" style="left:1302px;top:909.5px;letter-spacing:0.21px">118,29 mm x 62,06 mm</span>

</body></html>
